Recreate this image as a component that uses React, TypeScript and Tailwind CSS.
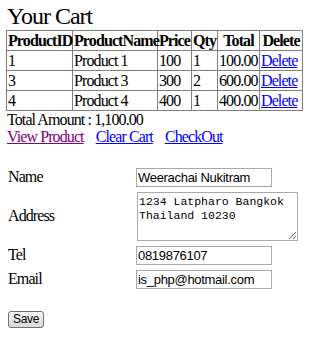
import React from 'react';

const items = [
  { id: '1', name: 'Product 1', price: '100', qty: '1', total: '100.00' },
  { id: '3', name: 'Product 3', price: '300', qty: '2', total: '600.00' },
  { id: '4', name: 'Product 4', price: '400', qty: '1', total: '400.00' },
];

const colWidths = ['w-[66px]', 'w-[85px]', 'w-[34px]', 'w-[26px]', 'w-[42px]', 'w-[43px]'];
const headers = ['ProductID', 'ProductName', 'Price', 'Qty', 'Total', 'Delete'];

const cell = 'border border-[#808080] p-0 px-[1px] leading-[19px] whitespace-nowrap';

const inputCls =
  "h-[19px] w-[136px] border border-[#a9a9a9] bg-white px-[1px] py-0 font-['Liberation_Sans',Arial,sans-serif] text-[13px] tracking-[-0.3px] text-black outline-none";

export default function App() {
  return (
    <div className="min-h-[343px] w-[327px] bg-white px-[6px] font-['Liberation_Serif','Times_New_Roman',serif] text-[16px] tracking-[-0.9px] text-black">
      {/* Title */}
      <h1 className="mt-[2px] h-[28px] pl-[1px] text-[24px] font-normal leading-[28px] tracking-[-1px]">Your Cart</h1>

      {/* Cart table */}
      <table className="w-[297px] table-fixed border-collapse">
        <colgroup>
          {colWidths.map((w, i) => (
            <col key={i} className={w} />
          ))}
        </colgroup>
        <thead>
          <tr>
            {headers.map((h) => (
              <th key={h} className={`${cell} text-center font-bold`}>
                {h}
              </th>
            ))}
          </tr>
        </thead>
        <tbody>
          {items.map((it) => (
            <tr key={it.id}>
              <td className={cell}>{it.id}</td>
              <td className={cell}>{it.name}</td>
              <td className={cell}>{it.price}</td>
              <td className={cell}>{it.qty}</td>
              <td className={cell}>{it.total}</td>
              <td className={cell}>
                <a href="#" className="text-[#0000ff] underline">
                  Delete
                </a>
              </td>
            </tr>
          ))}
        </tbody>
      </table>

      <div className="pl-[1px] leading-[17px]">Total Amount : 1,100.00</div>
      <div className="flex gap-[12px] pl-[1px] leading-[17px]">
        <a href="#" className="text-[#800080] underline">View Product</a>
        <a href="#" className="text-[#0000ff] underline">Clear Cart</a>
        <a href="#" className="text-[#0000ff] underline">CheckOut</a>
      </div>

      {/* Checkout form */}
      <form className="mt-[23px] ml-[2px] flex flex-col gap-[5px]">
        <div className="flex items-center">
          <span className="w-[128px] pb-[2px] leading-[17px]">Name</span>
          <input className={inputCls} defaultValue="Weerachai Nukitram" />
        </div>
        <div className="flex items-center">
          <span className="w-[128px] pb-[2px] leading-[17px]">Address</span>
          <textarea
            className="ml-[1px] h-[49px] w-[161px] resize-y border border-[#a9a9a9] bg-white px-[1px] pt-[2px] font-['Liberation_Mono','Courier_New',monospace] text-[11.5px] leading-[14px] tracking-[0px] text-black outline-none"
            defaultValue={'1234 Latpharo Bangkok\nThailand 10230'}
          />
        </div>
        <div className="flex items-center">
          <span className="w-[128px] pb-[2px] leading-[17px]">Tel</span>
          <input className={inputCls} defaultValue="0819876107" />
        </div>
        <div className="flex items-center">
          <span className="w-[128px] pb-[2px] leading-[17px]">Email</span>
          <input className={inputCls} defaultValue="is_php@hotmail.com" />
        </div>
        <div className="mt-[17px] flex">
          <button
            type="button"
            className="flex h-[17px] w-[36px] items-center justify-center rounded-[3px] border border-[#707070] bg-linear-to-b from-[#f6f6f6] to-[#d8d8d8] p-0 font-['Liberation_Sans',Arial,sans-serif] text-[12px] leading-[15px] tracking-[-0.3px] text-black"
          >
            Save
          </button>
        </div>
      </form>
    </div>
  );
}
